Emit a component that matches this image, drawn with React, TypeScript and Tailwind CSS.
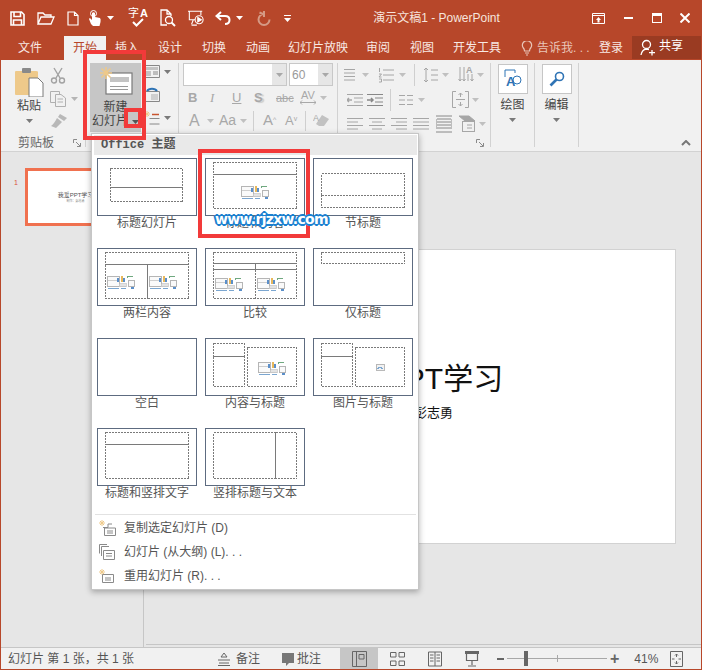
import React from 'react'

const CJK = "font-['Liberation_Sans','Noto_Sans_CJK_SC',sans-serif]"

type Box = [number, number, number, number]

interface LayoutThumb {
  label: string
  boxes: Box[]
  icons?: [number, number][]
  picture?: [number, number]
}

const layouts: LayoutThumb[] = [
  { label: '标题幻灯片', boxes: [[13, 10, 72, 19], [13, 29, 72, 14]] },
  { label: '标题和内容', boxes: [[8, 4, 83, 12], [8, 16, 83, 34]], icons: [[50, 33]] },
  { label: '节标题', boxes: [[8, 15, 83, 22], [8, 37, 83, 12]] },
  {
    label: '两栏内容',
    boxes: [[8, 4, 83, 12], [8, 16, 42, 34], [50, 16, 41, 34]],
    icons: [[24, 33], [66, 33]],
  },
  {
    label: '比较',
    boxes: [[8, 4, 83, 11], [8, 15, 42, 6], [50, 15, 41, 6], [8, 21, 42, 29], [50, 21, 41, 29]],
    icons: [[24, 35], [66, 35]],
  },
  { label: '仅标题', boxes: [[8, 4, 83, 11]] },
  { label: '空白', boxes: [] },
  {
    label: '内容与标题',
    boxes: [[8, 5, 31, 13], [8, 18, 31, 30], [42, 9, 49, 39]],
    icons: [[67, 29]],
  },
  {
    label: '图片与标题',
    boxes: [[8, 5, 31, 13], [8, 18, 31, 30], [42, 9, 49, 39]],
    picture: [67, 29],
  },
  { label: '标题和竖排文字', boxes: [[8, 4, 83, 12], [8, 16, 83, 34]] },
  { label: '竖排标题与文本', boxes: [[8, 4, 62, 46], [70, 4, 21, 46]] },
]

const MiniPicture = ({ x, y }: { x: number; y: number }) => (
  <g transform={`translate(${x - 4} ${y - 3})`}>
    <rect x="0" y="0" width="8" height="6" fill="#f2f2f2" stroke="#a8a8a8" strokeWidth="0.8" />
    <path d="M1 5 L4 3 L7 5" stroke="#7ba6d0" fill="none" strokeWidth="1" />
  </g>
)

const MiniContent = ({ x, y }: { x: number; y: number }) => (
  <g transform={`translate(${x - 14} ${y - 6})`}>
    <rect x="0.5" y="1.5" width="12" height="10" fill="#fafafa" stroke="#b5b5b5" />
    <path d="M1 5.5 H12" stroke="#cfcfcf" />
    <rect x="10" y="3" width="2" height="4" fill="#5b8fc9" />
    <rect x="14" y="1" width="2" height="6" fill="#e8b85b" />
    <rect x="16" y="3" width="2" height="4" fill="#5b8fc9" />
    <path d="M20 1.5 H26 M20 1.5 V3" stroke="#6fa87f" fill="none" />
    <rect x="21.5" y="5.5" width="6" height="6" fill="#fafafa" stroke="#b5b5b5" />
    <rect x="12" y="8.5" width="7" height="3" fill="#e3e3e3" stroke="#b5b5b5" strokeWidth="0.6" />
    <path d="M1 13 H12 M14 13 H19" stroke="#7ba6d0" />
    <path d="M24 13 H27" stroke="#5b8fc9" strokeWidth="2" />
  </g>
)

const LayoutCard = ({ item }: { item: LayoutThumb }) => (
  <div className="flex flex-col items-center w-[100px] h-[90px]">
    <svg width="100" height="58" viewBox="0 0 100 58" shapeRendering="crispEdges">
      <rect x="0.5" y="0.5" width="99" height="57" fill="#fff" stroke="#5d6b80" />
      {item.boxes.map((b, i) => (
        <rect
          key={i}
          x={b[0] + 0.5}
          y={b[1] + 0.5}
          width={b[2]}
          height={b[3]}
          fill="none"
          stroke="#7a7a7a"
          strokeDasharray="2 1"
        />
      ))}
      {item.icons?.map((p, i) => <MiniContent key={i} x={p[0]} y={p[1]} />)}
      {item.picture && <MiniPicture x={item.picture[0]} y={item.picture[1]} />}
    </svg>
    <span className="text-[12px] leading-[14px] text-[#555] whitespace-nowrap">
      {item.label}
    </span>
  </div>
)

const Caret = ({ color = '#7a7a7a' }: { color?: string }) => (
  <svg width="7" height="4" viewBox="0 0 7 4" className="shrink-0">
    <path d="M0 0 H7 L3.5 4 Z" fill={color} />
  </svg>
)

const Lines = ({ xs }: { xs: [number, number][] }) => (
  <svg width="18" height="16" viewBox="0 0 18 16" fill="none" stroke="#a6a6a6" className="shrink-0">
    {xs.map((l, i) => (
      <path key={i} d={`M${l[0]} ${2.5 + i * 3.5} H${l[1]}`} />
    ))}
  </svg>
)

const GroupSep = () => <div className="w-[1px] h-[84px] mt-[3px] bg-[#d2d2d2] shrink-0" />
const VSep = ({ h = 'h-[20px]' }: { h?: string }) => <div className={`w-[1px] bg-[#cfcfcf] ${h}`} />

const Launcher = () => (
  <svg width="8" height="8" viewBox="0 0 8 8" fill="none" stroke="#8a8a8a">
    <path d="M0.5 4 V0.5 H4 M3 3 L7 7 M4 7.5 H7.5 V4" />
  </svg>
)

const GroupLabel = ({ text }: { text?: string }) => (
  <div className="text-[12px] leading-[16px] text-[#666] text-center">{text}</div>
)

const qatWhite = '#ffffff'

const TitleBar = () => (
  <div className="h-[36px] flex items-center text-white relative shrink-0">
    <div className="w-[9px]" />
    <svg width="15" height="15" viewBox="0 0 15 15" fill="none" stroke={qatWhite} strokeWidth="1.6">
      <path d="M1 1 H11.5 L14 3.5 V14 H1 Z M4 1 V5.5 H10.5 V1 M3.5 14 V9 H11.5 V14" />
    </svg>
    <div className="w-[12px]" />
    <svg width="18" height="14" viewBox="0 0 18 14" fill="none" stroke={qatWhite} strokeWidth="1.3">
      <path d="M1 13 V2 H6 L8 4 H14 V6 M1 13 L4 6 H17 L14 13 Z" />
    </svg>
    <div className="w-[12px]" />
    <svg width="12" height="15" viewBox="0 0 12 15" fill="none" stroke={qatWhite} strokeWidth="1.2">
      <path d="M1 1 H7.5 L11 4.5 V14 H1 Z M7.5 1 V4.5 H11" />
    </svg>
    <div className="w-[9px]" />
    <svg width="14" height="17" viewBox="0 0 14 17" fill={qatWhite}>
      <path d="M3 14 L1 9 Q1 8 2.5 8.5 L4 10 V3 Q5.5 1.5 7 3 V7 L12 8 Q13 9 12.5 12 L11.5 16 H5 Z" />
      <circle cx="5.5" cy="3.5" r="3" fill="none" stroke={qatWhite} />
    </svg>
    <div className="w-[5px]" />
    <Caret color="#fff" />
    <div className="w-[14px]" />
    <div className="relative w-[22px] h-[20px]">
      <span className="absolute left-0 top-[-1px] text-[11px] leading-[12px]">字</span>
      <span className="absolute left-[12px] top-[-1px] text-[11px] leading-[12px] font-bold">A</span>
      <svg className="absolute left-[4px] top-[10px]" width="12" height="9" viewBox="0 0 12 9" fill="none" stroke="#fff" strokeWidth="2">
        <path d="M1 4 L4.5 7.5 L11 1" />
      </svg>
    </div>
    <div className="w-[9px]" />
    <svg width="18" height="18" viewBox="0 0 18 18" fill="none" stroke={qatWhite} strokeWidth="1.3">
      <path d="M8 16 H2 V1 H8 L12 5 V7 M8 1 V5 H12" />
      <circle cx="10" cy="11" r="3.5" />
      <path d="M12.5 13.5 L16 17" strokeWidth="2" />
    </svg>
    <div className="w-[10px]" />
    <svg width="18" height="16" viewBox="0 0 20 18" fill="none" stroke={qatWhite} strokeWidth="1.2">
      <path d="M1 1.5 H17 M2.5 2 V11 H9 M15.5 2 V6 M7 11 L5 16 M5 17 H11" />
      <circle cx="13.5" cy="11" r="4.5" />
      <path d="M12 8.5 L16 11 L12 13.5 Z" fill="#fff" />
    </svg>
    <div className="w-[10px]" />
    <svg width="16" height="15" viewBox="0 0 16 15" fill="none" stroke={qatWhite} strokeWidth="2">
      <path d="M6 1 L1.5 5 L6 9 M2 5 H10 Q14.5 5 14.5 9 Q14.5 13 10 13" />
    </svg>
    <div className="w-[5px]" />
    <Caret color="#fff" />
    <div className="w-[14px]" />
    <svg width="14" height="15" viewBox="0 0 14 15" fill="none" stroke="#d59a85" strokeWidth="2">
      <path d="M7 3 A5.5 5.5 0 1 0 12.5 8.5 M7 0 V6 M2.5 1.5 L7 3.5" />
    </svg>
    <div className="w-[13px]" />
    <svg width="7" height="7" viewBox="0 0 7 7" fill="#fff">
      <path d="M0 0 H7 V1 H0 Z M0 3 H7 L3.5 7 Z" />
    </svg>
    <div className="flex-1 text-center text-[12px] leading-[16px] pr-[10px] text-[#f6e4dd] font-['Liberation_Sans','Noto_Sans_CJK_SC',sans-serif]">
      演示文稿1 - PowerPoint
    </div>
    <svg width="13" height="11" viewBox="0 0 13 11" fill="none" stroke={qatWhite}>
      <path d="M0.5 0.5 H12.5 V10.5 H0.5 Z M0.5 2.5 H12.5" />
      <path d="M6.5 4 L9 7 H7.5 V9.5 H5.5 V7 H4 Z" fill="#fff" stroke="none" />
    </svg>
    <div className="w-[19px]" />
    <div className="w-[9px] h-[2px] bg-white" />
    <div className="w-[19px]" />
    <div className="w-[10px] h-[10px] border border-white border-t-[3px]" />
    <div className="w-[18px]" />
    <svg width="10" height="10" viewBox="0 0 10 10" stroke={qatWhite} strokeWidth="2">
      <path d="M0.5 0.5 L9.5 9.5 M9.5 0.5 L0.5 9.5" />
    </svg>
    <div className="w-[11px]" />
  </div>
)

const Tab = ({ w, text, active }: { w: string; text: string; active?: boolean }) => (
  <div
    className={`${w} h-full flex items-center justify-center text-[12px] ${
      active ? 'bg-[#f1f1f1] text-[#b7472a]' : 'text-[#f8e9e4]'
    }`}
  >
    {text}
  </div>
)

const TabRow = () => (
  <div className="h-[24px] flex pl-[7px] shrink-0">
    <Tab w="w-[44px]" text="文件" />
    <div className="w-[12px]" />
    <Tab w="w-[42px]" text="开始" active />
    <Tab w="w-[42px]" text="插入" />
    <Tab w="w-[44px]" text="设计" />
    <Tab w="w-[44px]" text="切换" />
    <Tab w="w-[44px]" text="动画" />
    <Tab w="w-[76px]" text="幻灯片放映" />
    <Tab w="w-[44px]" text="审阅" />
    <Tab w="w-[44px]" text="视图" />
    <Tab w="w-[66px]" text="开发工具" />
    <div className="w-[80px] h-full flex items-center pl-[11px] gap-[4px] text-[12px] text-[#e9c5b8]">
      <svg width="12" height="15" viewBox="0 0 12 15" fill="none" stroke="#e9c5b8" strokeWidth="1.2">
        <path d="M3.5 10 Q3.5 8 2 6.5 A4.6 4.6 0 1 1 10 6.5 Q8.5 8 8.5 10 Z M4 12 H8 M5 14 H7" />
      </svg>
      告诉我. . .
    </div>
    <Tab w="w-[42px]" text="登录" />
    <div className="flex-1 h-[23px] bg-[#9a3b22] flex items-center pl-[8px] gap-[3px] text-[12px] text-white">
      <svg width="16" height="17" viewBox="0 0 16 17" fill="none" stroke="#fff" strokeWidth="1.3">
        <circle cx="6.5" cy="5.5" r="4" />
        <path d="M1 16 Q2 10.5 6.5 10 L9 10.5 M12 11 V16.5 M9 13.7 H15" />
      </svg>
      <span className="-mt-[4px]">共享</span>
    </div>
  </div>
)

const Clipboard = () => (
  <div className="w-[84px] shrink-0 flex flex-col">
    <div className="h-[75px] flex pl-[13px] pt-[7px]">
      <div className="w-[30px] flex flex-col items-center">
        <svg width="30" height="30" viewBox="0 0 30 30">
          <path d="M1 5 Q1 4 2 4 H22 Q24 4 24 5 V28 H2 Q1 28 1 27 Z" fill="#eec98a" />
          <rect x="8" y="1" width="9" height="5" rx="1" fill="#8a8a8a" />
          <path d="M15 11 H24 L29 16 V30 H15 Z" fill="#fff" stroke="#7a7a7a" />
        </svg>
        <span className="text-[12px] leading-[14px] mt-[2px] text-[#444]">粘贴</span>
        <div className="mt-[6px]">
          <Caret />
        </div>
      </div>
      <div className="ml-[6px] flex flex-col gap-[6px]">
        <svg width="16" height="17" viewBox="0 0 16 17" fill="none" stroke="#a2a2a2" strokeWidth="1.4">
          <path d="M4 1 L10 11 M12 1 L6 11" />
          <circle cx="4" cy="13.5" r="2.5" />
          <circle cx="12" cy="13.5" r="2.5" />
        </svg>
        <div className="flex items-center gap-[5px]">
          <svg width="16" height="17" viewBox="0 0 16 17" fill="none" stroke="#b0b0b0">
            <path d="M0.5 1.5 H9.5 V4 M0.5 1.5 V12.5 H5 M5.5 4.5 H11 L15.5 8 V16.5 H5.5 Z M7.5 9 H13 M7.5 12 H13" />
          </svg>
          <Caret color="#b5b5b5" />
        </div>
        <svg width="18" height="15" viewBox="0 0 18 15" fill="#b8b8b8">
          <path d="M10 1 L17 5 L14 8 L8 4 Z M7 5 L12 9 L6 15 L1 13 Q4 11 7 5 Z" />
        </svg>
      </div>
    </div>
    <div className="flex items-center pl-[17px] pr-[4px]">
      <GroupLabel text="剪贴板" />
      <div className="flex-1" />
      <Launcher />
    </div>
  </div>
)

const Slides = () => (
  <div className="w-[92px] shrink-0 flex flex-col">
    <div className="h-[75px] flex pl-[4px] pt-[3px]">
      <div className="w-[51px] h-[69px] bg-[#c6c6c6] flex flex-col items-center">
        <svg width="34" height="30" viewBox="0 0 34 30" className="mt-[3px]">
          <rect x="7" y="7" width="26" height="21" fill="#fff" stroke="#7a7a7a" strokeWidth="1.2" />
          <rect x="11" y="11" width="19" height="5" fill="#c4c4c4" />
          <path d="M11 20.5 H29 M11 23.5 H29" stroke="#9a9a9a" />
          <g stroke="#eec98a" strokeWidth="1.6">
            <path d="M7 1 V13 M1 7 H13 M2.5 2.5 L11.5 11.5 M11.5 2.5 L2.5 11.5" />
          </g>
        </svg>
        <span className="text-[12px] leading-[14px] mt-[4px] text-[#444]">新建</span>
        <div className="flex items-center w-full pl-[2px] text-[12px] leading-[14px] text-[#444]">
          幻灯片
          <div className="ml-[4px] mt-[1px]">
            <Caret color="#555" />
          </div>
        </div>
      </div>
      <div className="ml-[3px] flex flex-col gap-[8px] pt-[1px]">
        <div className="flex items-center gap-[4px]">
          <svg width="16" height="15" viewBox="0 0 16 15" fill="none" stroke="#888">
            <path d="M0.5 1.5 H15.5 V13.5 H0.5 Z" />
            <rect x="2" y="3" width="12" height="3" fill="#c4c4c4" stroke="none" />
            <rect x="2" y="7" width="5" height="5" fill="#c4c4c4" stroke="none" />
            <path d="M9 8 H14 M9 10 H14" />
          </svg>
          <Caret />
        </div>
        <svg width="16" height="15" viewBox="0 0 16 15" fill="none" stroke="#888">
          <path d="M0.5 4.5 H15.5 V14.5 H0.5 Z" />
          <rect x="7" y="7" width="7" height="6" fill="#cfcfcf" stroke="none" />
          <path d="M3 4 A5.5 4 0 0 1 13 4" stroke="#2f74b5" strokeWidth="2" />
        </svg>
        <div className="flex items-center gap-[4px]">
          <svg width="16" height="15" viewBox="0 0 16 15" fill="none">
            <path d="M3 1 V7 M0 4 H6 M1 2 L5 6 M5 2 L1 6" stroke="#eec98a" />
            <path d="M5.5 8.5 H15.5 M5.5 14 H15.5" stroke="#888" />
            <path d="M8 4.5 H15" stroke="#c8552f" strokeWidth="1.5" />
          </svg>
          <Caret />
        </div>
      </div>
    </div>
    <GroupLabel />
  </div>
)

const FontGroup = () => (
  <div className="w-[158px] shrink-0 flex flex-col text-[#a8a8a8]">
    <div className="h-[75px] flex flex-col pl-[4px] pt-[3px]">
      <div className="flex gap-[2px] h-[23px]">
        <div className="w-[104px] bg-white border border-[#c8c8c8] flex justify-end">
          <div className="w-[14px] bg-[#e6e6e6] flex items-center justify-center">
            <Caret color="#a8a8a8" />
          </div>
        </div>
        <div className="w-[44px] bg-white border border-[#c8c8c8] flex items-center">
          <span className="flex-1 pl-[2px] text-[12px] text-[#999] font-['Liberation_Sans',sans-serif]">60</span>
          <div className="w-[14px] h-full bg-[#e6e6e6] flex items-center justify-center">
            <Caret color="#a8a8a8" />
          </div>
        </div>
      </div>
      <div className="flex items-center h-[22px] mt-[1px] pl-[5px] text-[13px] font-['Liberation_Sans',sans-serif]">
        <span className="w-[22px] font-bold">B</span>
        <span className="w-[22px] italic font-['Liberation_Serif',serif]">I</span>
        <span className="w-[22px] underline">U</span>
        <span className="w-[22px] font-bold [text-shadow:2px_1px_1px_#ccc]">S</span>
        <span className="w-[23px] text-[11px] line-through">abc</span>
        <div className="w-[18px] flex flex-col items-center text-[11px] leading-[9px]">
          AV
          <svg width="16" height="5" viewBox="0 0 16 5" fill="none" stroke="#a8a8a8">
            <path d="M0 2.5 H16 M2 0.5 L0 2.5 L2 4.5 M14 0.5 L16 2.5 L14 4.5" />
          </svg>
        </div>
        <div className="ml-[3px]">
          <Caret color="#c0c0c0" />
        </div>
      </div>
      <div className="flex items-center h-[23px] pl-[6px] font-['Liberation_Sans',sans-serif]">
        <span className="text-[16px] w-[18px]">A</span>
        <Caret color="#c0c0c0" />
        <span className="text-[14px] w-[22px] ml-[5px]">Aa</span>
        <div className="ml-[-1px]">
          <Caret color="#c0c0c0" />
        </div>
        <div className="ml-[6px]">
          <VSep />
        </div>
        <span className="text-[15px] w-[22px] ml-[9px]">
          A<sup className="text-[7px]">^</sup>
        </span>
        <span className="text-[13px] w-[20px]">
          A<sup className="text-[7px]">v</sup>
        </span>
        <VSep />
        <svg className="ml-[7px]" width="17" height="15" viewBox="0 0 17 15" fill="#c2c2c2">
          <path d="M9 2 L16 6 L11 13 H6 L3 11 Z" />
          <text x="0" y="8" fontSize="9" fill="#a8a8a8">
            A
          </text>
        </svg>
      </div>
    </div>
    <GroupLabel />
  </div>
)

const ParagraphGroup = () => (
  <div className="flex-1 flex flex-col relative">
    <div className="h-[75px] flex flex-col pl-[3px] pt-[3px] gap-[1px]">
      <div className="flex items-center h-[24px]">
        <Lines xs={[[3, 14], [3, 14], [3, 14], [3, 14]]} />
        <div className="ml-[3px]">
          <Caret color="#c0c0c0" />
        </div>
        <div className="ml-[9px]">
          <svg width="16" height="16" viewBox="0 0 16 16" fill="none" stroke="#a6a6a6">
            <path d="M5 3 H16 M5 8 H16 M5 13 H16 M1.5 1 V5 M1 7 H3.5 L1 10 H3.5 M1 12 H3.5 V15 H1" />
          </svg>
        </div>
        <div className="ml-[5px]">
          <Caret color="#c0c0c0" />
        </div>
        <div className="ml-[8px]">
          <VSep h="h-[22px]" />
        </div>
        <svg className="ml-[8px]" width="16" height="16" viewBox="0 0 16 16" fill="none" stroke="#a6a6a6">
          <path d="M3 1 V15 M1 3 L3 1 L5 3 M1 13 L3 15 L5 13 M8 3 H15 M8 8 H15 M8 13 H15" />
        </svg>
        <div className="ml-[3px]">
          <Caret color="#c0c0c0" />
        </div>
        <svg className="ml-[9px]" width="16" height="18" viewBox="0 0 16 18" fill="none" stroke="#a6a6a6">
          <path d="M2 1 V15 M0.5 13 L2 15 L3.5 13 M6 1 V15 M4.5 13 L6 15 L7.5 13 M14 8 V15 M12.5 13 L14 15 L15.5 13 M10 8 V15" />
          <text x="8" y="7" fontSize="9" fontWeight="700" fill="#a6a6a6" stroke="none">
            A
          </text>
        </svg>
        <div className="ml-[3px]">
          <Caret color="#c0c0c0" />
        </div>
      </div>
      <div className="flex items-center h-[23px] pl-[6px]">
        <svg width="16" height="14" viewBox="0 0 16 14" fill="none" stroke="#a6a6a6">
          <path d="M0 1.5 H16 M7 5 H16 M7 9 H16 M0 12.5 H16" />
          <path d="M5 7 H0 M2 5 L0 7 L2 9" strokeWidth="1.5" />
        </svg>
        <svg className="ml-[4px]" width="16" height="14" viewBox="0 0 16 14" fill="none" stroke="#888">
          <path d="M0 1.5 H16 M8 5 H16 M8 9 H16 M0 12.5 H16" />
          <path d="M0 7 H6 M4 5 L6 7 L4 9" strokeWidth="1.5" />
        </svg>
        <div className="ml-[7px]">
          <VSep h="h-[22px]" />
        </div>
        <svg className="ml-[8px]" width="14" height="12" viewBox="0 0 14 12" fill="none" stroke="#a6a6a6">
          <path d="M0 1.5 H6 M8 1.5 H14 M0 6 H6 M8 6 H14 M0 10.5 H6 M8 10.5 H14" />
        </svg>
        <div className="ml-[5px]">
          <Caret color="#c0c0c0" />
        </div>
        <svg className="ml-[27px]" width="17" height="17" viewBox="0 0 17 17" fill="none" stroke="#a6a6a6">
          <path d="M4 0.5 H0.5 V16.5 H4 M13 0.5 H16.5 V16.5 H13 M4 8.5 H13" />
          <path d="M8.5 2 V6 M6.5 4 L8.5 2 L10.5 4 M8.5 15 V11 M6.5 13 L8.5 15 L10.5 13" />
        </svg>
        <div className="ml-[3px]">
          <Caret color="#c0c0c0" />
        </div>
      </div>
      <div className="flex items-center h-[23px] pl-[6px] gap-[6px]">
        <Lines xs={[[0, 16], [0, 11], [0, 16], [0, 11]]} />
        <div className="-ml-[2px]">
          <Lines xs={[[0, 16], [3, 13], [0, 16], [3, 13]]} />
        </div>
        <div className="-ml-[2px]">
          <Lines xs={[[0, 16], [5, 16], [0, 16], [5, 16]]} />
        </div>
        <div className="-ml-[2px]">
          <Lines xs={[[0, 16], [0, 16], [0, 16], [0, 16]]} />
        </div>
        <svg className="-ml-[1px]" width="16" height="18" viewBox="0 0 16 18" fill="none" stroke="#888">
          <path d="M0 1 H16 M0 17 H16 M1 4 H15 M1 7 H15 M1 10 H15 M1 13 H15 M0 4 V14 M16 4 V14" />
        </svg>
        <svg className="ml-[1px]" width="16" height="17" viewBox="0 0 16 17" fill="none" stroke="#a6a6a6">
          <path d="M0 1 H10 L16 6 H6 Z" fill="#a6a6a6" />
          <rect x="3.5" y="6.5" width="12" height="10" />
          <path d="M8 10 H13 M8 13 H13" />
        </svg>
        <div className="-ml-[2px]">
          <Caret color="#c0c0c0" />
        </div>
      </div>
    </div>
    <div className="flex justify-end pr-[6px] pt-[4px]">
      <Launcher />
    </div>
  </div>
)

const BigGroup = ({ label, children }: { label: string; children: React.ReactNode }) => (
  <div className="w-[43px] shrink-0 flex flex-col items-center pt-[4px]">
    <div className="w-[30px] h-[30px] bg-white border border-[#c6c6c6] flex items-center justify-center">
      {children}
    </div>
    <span className="text-[12px] leading-[14px] mt-[4px] text-[#444]">{label}</span>
    <div className="mt-[6px]">
      <Caret />
    </div>
  </div>
)

const Ribbon = () => (
  <div className={`h-[92px] flex bg-[#f1f1f1] border-b border-[#d2d2d2] shrink-0 ${CJK}`}>
    <Clipboard />
    <GroupSep />
    <Slides />
    <GroupSep />
    <FontGroup />
    <GroupSep />
    <div className="w-[152px] shrink-0 flex">
      <ParagraphGroup />
    </div>
    <GroupSep />
    <BigGroup label="绘图">
      <svg width="18" height="20" viewBox="0 0 18 20" fill="none">
        <path d="M1 8 V1 H11 V4" stroke="#2f74b5" />
        <circle cx="13" cy="11" r="4" stroke="#2f74b5" />
        <text x="2" y="17" fontSize="13" fontWeight="700" fill="#2f74b5" fontFamily="Liberation Sans">
          A
        </text>
      </svg>
    </BigGroup>
    <GroupSep />
    <BigGroup label="编辑">
      <svg width="16" height="16" viewBox="0 0 16 16" fill="none" stroke="#2f74b5">
        <circle cx="10.5" cy="5.5" r="4" strokeWidth="1.6" />
        <path d="M7.5 8.5 L1.5 14.5" strokeWidth="2.6" />
      </svg>
    </BigGroup>
    <GroupSep />
    <div className="flex-1 flex items-end justify-end pr-[10px] pb-[5px]">
      <svg width="10" height="6" viewBox="0 0 10 6" fill="none" stroke="#777" strokeWidth="2">
        <path d="M1 5 L5 1 L9 5" />
      </svg>
    </div>
  </div>
)

const MenuItem = ({ icon, text }: { icon: React.ReactNode; text: string }) => (
  <div className="h-[24px] flex items-center">
    <div className="w-[30px] pl-[5px] flex items-center">{icon}</div>
    <span className="text-[12px] text-[#555] whitespace-pre">{text}</span>
  </div>
)

const LayoutMenu = () => (
  <div className="absolute left-[90px] top-[133px] w-[328px] h-[457px] bg-white border border-[#c6c6c6] shadow-[0_2px_6px_rgba(0,0,0,0.3)] p-[1px] pl-[2px]">
    <div className="h-[20px] bg-[#e9e9e9] flex items-center pl-[7px] text-[12px] font-bold text-[#555] font-['Liberation_Mono','Noto_Sans_CJK_SC',monospace]">
      Office 主题
    </div>
    <div className="grid grid-cols-[100px_100px_100px] gap-x-[8px] pl-[3px] pt-[3px]">
      {layouts.map((item) => (
        <LayoutCard key={item.label} item={item} />
      ))}
    </div>
    <div className="h-[1px] bg-[#e2e2e2] mt-[-4px] mx-[1px]" />
    <div className="pt-[1px]">
      <MenuItem
        text="复制选定幻灯片 (D)"
        icon={
          <svg width="17" height="16" viewBox="0 0 17 16" fill="none">
            <path d="M3 0 V6 M0 3 H6 M1 1 L5 5 M5 1 L1 5" stroke="#eec98a" />
            <path d="M4 7.5 H9 V4 H13 M5.5 8 H16.5 V15.5 H5.5 Z M8 11 H14 M8 13 H14" stroke="#8a8a8a" />
          </svg>
        }
      />
      <MenuItem
        text="幻灯片 (从大纲) (L). . ."
        icon={
          <svg width="16" height="16" viewBox="0 0 16 16" fill="none" stroke="#8a8a8a">
            <path d="M0.5 9.5 V0.5 H8 M2.5 12 V2.5 H10 M4.5 6.5 H15.5 V15.5 H4.5 Z M7 9.5 H13 M7 12 H13" />
          </svg>
        }
      />
      <MenuItem
        text="重用幻灯片 (R). . ."
        icon={
          <svg width="15" height="14" viewBox="0 0 15 14" fill="none">
            <path d="M3 0 V6 M0 3 H6 M1 1 L5 5 M5 1 L1 5" stroke="#eec98a" />
            <path d="M3.5 5.5 H14.5 V13.5 H3.5 Z M6 9 H12 M6 11 H12" stroke="#8a8a8a" />
          </svg>
        }
      />
    </div>
  </div>
)

const Workspace = () => (
  <div className={`flex-1 min-h-0 flex bg-[#e6e6e6] ${CJK}`}>
    <div className="w-[143px] shrink-0 border-r border-[#c6c6c6] flex pt-[16px] pl-[13px]">
      <span className="text-[#d9533a] text-[7px] leading-[10px] mt-[10px] w-[11px]">1</span>
      <div className="w-[101px] h-[58px] bg-white border-[3px] border-[#f0714f] flex flex-col items-center justify-center">
        <span className="text-[6px] leading-[8px] text-[#555] whitespace-nowrap">我爱PPT学习</span>
        <span className="text-[3px] leading-[5px] text-[#888]">制作：彭志勇</span>
      </div>
    </div>
    <div className="flex-1 flex flex-col pl-[8px] pr-[25px] pt-[97px] pb-0">
      <div className="h-[295px] bg-white border border-[#d2d2d2] flex flex-col items-center pt-[109px]">
        <span className="text-[30px] leading-[40px] text-[#111] whitespace-nowrap">我爱PPT学习</span>
        <span className="text-[13px] leading-[16px] mt-[6px] text-[#111]">制作：彭志勇</span>
      </div>
      <div className="flex-1" />
      <div className="h-[1px] -mr-[25px] -ml-[6px] bg-[#c6c6c6] mb-[2px]" />
    </div>
  </div>
)

const StatusBar = () => (
  <div className={`h-[22px] flex items-center bg-[#f1f1f1] border-t border-[#c6c6c6] shrink-0 text-[12px] text-[#555] ${CJK}`}>
    <span className="w-[217px] pl-[7px] whitespace-nowrap">幻灯片 第 1 张，共 1 张</span>
    <svg width="12" height="14" viewBox="0 0 12 14" fill="none" stroke="#666">
      <path d="M3 5 L6 1 L9 5 Z M0 8 H12 M1 11 H11 M0 13.5 H12" />
    </svg>
    <span className="ml-[6px] w-[46px]">备注</span>
    <svg width="12" height="14" viewBox="0 0 12 14" fill="#777">
      <path d="M0 1 H12 V11 H7 L4 14 V11 H0 Z" />
    </svg>
    <span className="ml-[3px] w-[43px]">批注</span>
    <div className="w-[38px] h-full bg-[#c6c6c6] flex items-center justify-center">
      <svg width="15" height="16" viewBox="0 0 15 16" fill="none" stroke="#666">
        <path d="M0.5 0.5 H14.5 V15.5 H0.5 Z M4.5 0.5 V15.5 M7 3.5 H12 V8 H7 Z" />
      </svg>
    </div>
    <div className="w-[38px] flex justify-center">
      <svg width="15" height="16" viewBox="0 0 15 16" fill="none" stroke="#666">
        <path d="M0.5 1.5 H6 V6 H0.5 Z M9 1.5 H14.5 V6 H9 Z M0.5 10 H6 V14.5 H0.5 Z M9 10 H14.5 V14.5 H9 Z" />
      </svg>
    </div>
    <div className="w-[38px] flex justify-center">
      <svg width="14" height="16" viewBox="0 0 14 16" fill="none" stroke="#666">
        <path d="M0.5 1 H13.5 V15 H0.5 Z M7 1 V15 M2 4 H5.5 M2 7 H5.5 M2 10 H5.5 M8.5 4 H12 M8.5 7 H12 M8.5 10 H12" />
      </svg>
    </div>
    <div className="w-[36px] flex justify-center">
      <svg width="14" height="16" viewBox="0 0 14 16" fill="none" stroke="#666">
        <path d="M0 1 H14 M1.5 1 V9.5 H12.5 V1 M7 10 V14 M3 15 H11" strokeWidth="1.2" />
        <rect x="0" y="0" width="14" height="3" fill="#666" stroke="none" />
      </svg>
    </div>
    <div className="w-[7px] h-[2px] bg-[#666] ml-[7px]" />
    <div className="relative w-[100px] h-[1px] bg-[#a8a8a8] ml-[3px]">
      <div className="absolute left-[17px] top-[-7px] w-[4px] h-[15px] bg-[#666]" />
      <div className="absolute left-[50px] top-[-3px] w-[1px] h-[7px] bg-[#a8a8a8]" />
    </div>
    <span className="ml-[3px] text-[16px] font-bold leading-[14px] text-[#666]">+</span>
    <span className="ml-[15px] w-[36px] text-[#555] font-['Liberation_Sans',sans-serif]">41%</span>
    <svg width="13" height="16" viewBox="0 0 13 16" fill="none" stroke="#666">
      <path d="M0.5 0.5 H12.5 V15.5 H0.5 Z M6.5 3 V6 M5 4.5 L6.5 3 L8 4.5 M6.5 13 V10 M5 11.5 L6.5 13 L8 11.5 M2 8 H4.5 M8.5 8 H11" />
    </svg>
  </div>
)

export default function App() {
  return (
    <div className={`relative w-[702px] h-[670px] overflow-hidden bg-[#b7472a] flex flex-col border-x border-b border-[#b7472a] ${CJK}`}>
      <TitleBar />
      <TabRow />
      <Ribbon />
      <Workspace />
      <StatusBar />
      <LayoutMenu />
      {/* annotations drawn over the shot */}
      <div className="absolute left-[82px] top-[50px] w-[63px] h-[90px] border-[4px] border-[#f23a3a]" />
      <div className="absolute left-[123px] top-[108px] w-[18px] h-[20px] border-[4px] border-[#f23a3a]" />
      <div className="absolute left-[197px] top-[149px] w-[112px] h-[89px] border-[4px] border-[#f23a3a]" />
      <div className="absolute left-[214px] top-[210px] text-[14px] leading-[18px] font-bold text-white whitespace-nowrap font-['DejaVu_Sans',sans-serif] tracking-[-0.7px] [text-shadow:2px_0_0_#1a80d0,-2px_0_0_#1a80d0,0_2px_0_#1a80d0,0_-2px_0_#1a80d0,1px_1px_0_#1a80d0,-1px_-1px_0_#1a80d0,1px_-1px_0_#1a80d0,-1px_1px_0_#1a80d0]">
        www.rjzxw.com
      </div>
    </div>
  )
}
